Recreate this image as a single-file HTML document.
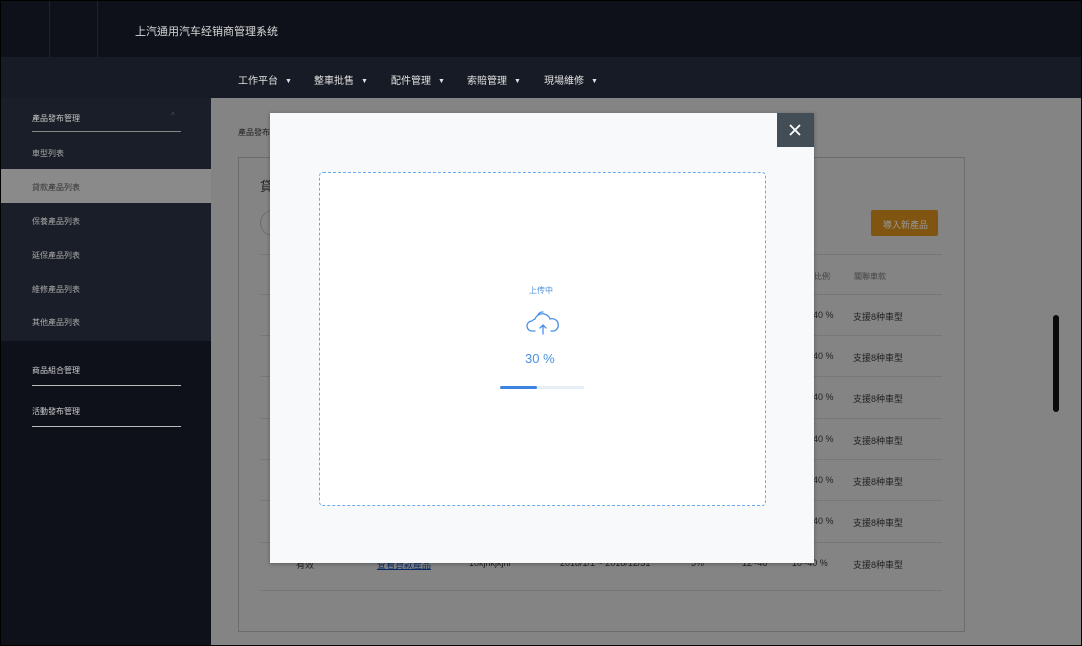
<!DOCTYPE html>
<html><head><meta charset="utf-8"><style>
*{margin:0;padding:0;box-sizing:border-box}
body{width:1082px;height:646px;overflow:hidden;position:relative;background:#000;font-family:"Liberation Sans","Noto Sans CJK TC",sans-serif}
.a{position:absolute}
.t{position:absolute;white-space:nowrap}
.ar{display:inline-block;margin-left:7px;font-size:7px;vertical-align:1px}
</style></head><body>
<div class="a" style="left:1px;top:1px;width:1080px;height:644px;background:#848484;overflow:hidden">
 <div class="a" style="left:0;top:0;width:1080px;height:56px;background:#0e111a"></div>
 <div class="a" style="left:48px;top:0;width:1px;height:56px;background:#1f232c"></div>
 <div class="a" style="left:96px;top:0;width:1px;height:56px;background:#1f232c"></div>
 <div class="t" style="left:134px;top:22px;font-size:11px;color:#d8d8d8">上汽通用汽车经销商管理系统</div>
 <div class="a" style="left:0;top:56px;width:1080px;height:41px;background:#171b25"></div>
 <div class="t" style="left:237px;top:71px;font-size:10px;color:#e0e0e0">工作平台<span class="ar">▼</span></div>
 <div class="t" style="left:313px;top:71px;font-size:10px;color:#e0e0e0">整車批售<span class="ar">▼</span></div>
 <div class="t" style="left:390px;top:71px;font-size:10px;color:#e0e0e0">配件管理<span class="ar">▼</span></div>
 <div class="t" style="left:466px;top:71px;font-size:10px;color:#e0e0e0">索賠管理<span class="ar">▼</span></div>
 <div class="t" style="left:543px;top:71px;font-size:10px;color:#e0e0e0">現場維修<span class="ar">▼</span></div>
 <div class="a" style="left:0;top:97px;width:210px;height:547px;background:#0e111a"></div>
 <div class="a" style="left:0;top:97px;width:210px;height:243px;background:#1a1e28"></div>
 <div class="a" style="left:0;top:168px;width:210px;height:34px;background:#8a8a8a"></div>
 <div class="t" style="left:31px;top:112px;font-size:8px;color:#c8c8c8">產品發布管理</div>
 <div class="t" style="left:170px;top:110px;font-size:8px;color:#555">^</div>
 <div class="a" style="left:31px;top:130px;width:149px;height:1px;background:#888"></div>
 <div class="t" style="left:31px;top:147px;font-size:8px;color:#aaa">車型列表</div>
 <div class="t" style="left:31px;top:181px;font-size:8px;color:#333">貸款產品列表</div>
 <div class="t" style="left:31px;top:215px;font-size:8px;color:#aaa">保養產品列表</div>
 <div class="t" style="left:31px;top:249px;font-size:8px;color:#aaa">延保產品列表</div>
 <div class="t" style="left:31px;top:283px;font-size:8px;color:#aaa">維修產品列表</div>
 <div class="t" style="left:31px;top:316px;font-size:8px;color:#aaa">其他產品列表</div>
 <div class="t" style="left:31px;top:364px;font-size:8px;color:#d0d0d0">商品組合管理</div>
 <div class="a" style="left:31px;top:384px;width:149px;height:1px;background:#bbb"></div>
 <div class="t" style="left:31px;top:405px;font-size:8px;color:#d0d0d0">活動發布管理</div>
 <div class="a" style="left:31px;top:425px;width:149px;height:1px;background:#bbb"></div>
 <div class="t" style="left:237px;top:126px;font-size:8px;color:#222">產品發布</div>
 <div class="a" style="left:237px;top:156px;width:727px;height:475px;border:1px solid #6c6c6c"></div>
 <div class="t" style="left:259px;top:175px;font-size:13px;color:#222">貸</div>
 <div class="a" style="left:259px;top:209px;width:30px;height:26px;border:1px solid #6e6e6e;border-radius:13px"></div>
 <div class="a" style="left:870px;top:209px;width:67px;height:26px;background:#805511;border-radius:2px"></div>
 <div class="t" style="left:882px;top:217px;font-size:9px;color:#999">導入新產品</div>
 <div class="a" style="left:260px;top:253px;width:681px;height:1px;background:#777"></div>
 <div class="t" style="left:813px;top:270px;font-size:8px;color:#444">比例</div>
 <div class="t" style="left:853px;top:270px;font-size:8px;color:#444">關聯車款</div>
 <div class="a" style="left:260px;top:293px;width:681px;height:1px;background:#777"></div>
 <div class="a" style="left:260px;top:334px;width:681px;height:1px;background:#777"></div>
 <div class="a" style="left:260px;top:375px;width:681px;height:1px;background:#777"></div>
 <div class="a" style="left:260px;top:417px;width:681px;height:1px;background:#777"></div>
 <div class="a" style="left:260px;top:458px;width:681px;height:1px;background:#777"></div>
 <div class="a" style="left:260px;top:499px;width:681px;height:1px;background:#777"></div>
 <div class="a" style="left:260px;top:541px;width:681px;height:1px;background:#777"></div>
 <div class="a" style="left:260px;top:589px;width:681px;height:1px;background:#777"></div>
 <div class="t" style="left:812px;top:309px;font-size:9px;color:#222">40 %</div>
 <div class="t" style="left:852px;top:309px;font-size:9px;color:#222">支援8种車型</div>
 <div class="t" style="left:812px;top:350px;font-size:9px;color:#222">40 %</div>
 <div class="t" style="left:852px;top:350px;font-size:9px;color:#222">支援8种車型</div>
 <div class="t" style="left:812px;top:391px;font-size:9px;color:#222">40 %</div>
 <div class="t" style="left:852px;top:391px;font-size:9px;color:#222">支援8种車型</div>
 <div class="t" style="left:812px;top:433px;font-size:9px;color:#222">40 %</div>
 <div class="t" style="left:852px;top:433px;font-size:9px;color:#222">支援8种車型</div>
 <div class="t" style="left:812px;top:474px;font-size:9px;color:#222">40 %</div>
 <div class="t" style="left:852px;top:474px;font-size:9px;color:#222">支援8种車型</div>
 <div class="t" style="left:812px;top:515px;font-size:9px;color:#222">40 %</div>
 <div class="t" style="left:852px;top:515px;font-size:9px;color:#222">支援8种車型</div>
 <div class="t" style="left:295px;top:557px;font-size:9px;color:#222">有效</div>
 <div class="t" style="left:376px;top:557px;font-size:9px;color:#0a2a66;text-decoration:underline">查看貸款產品</div>
 <div class="t" style="left:468px;top:557px;font-size:9px;color:#222">10kjhkjkjhl</div>
 <div class="t" style="left:559px;top:557px;font-size:9px;color:#222">2018/1/1 ~ 2018/12/31</div>
 <div class="t" style="left:690px;top:557px;font-size:9px;color:#222">5%</div>
 <div class="t" style="left:741px;top:557px;font-size:9px;color:#222">12~48</div>
 <div class="t" style="left:791px;top:557px;font-size:9px;color:#222">10~40 %</div>
 <div class="t" style="left:852px;top:557px;font-size:9px;color:#222">支援8种車型</div>
 <div class="a" style="left:1052px;top:314px;width:6px;height:97px;background:#0a0a0a;border-radius:3px"></div>
 <div class="a" style="left:269px;top:112px;width:544px;height:450px;background:#f8f9fb;box-shadow:0 1px 4px rgba(0,0,0,.3)"></div>
 <div class="a" style="left:776px;top:112px;width:37px;height:34px;background:#434d55"></div>
 <svg class="a" style="left:787px;top:122px" width="14" height="14" viewBox="0 0 14 14"><path d="M2 2L12 12M12 2L2 12" stroke="#fff" stroke-width="1.8"/></svg>
 <div class="a" style="left:318px;top:171px;width:447px;height:334px;background:#fff;border:1px dashed #6aaaf0;border-radius:4px"></div>
 <div class="t" style="left:528px;top:284px;font-size:8px;color:#4a90e2">上传中</div>
 <svg class="a" style="left:525px;top:308px" width="34" height="28" viewBox="0 0 34 28"><path d="M9 22H6a5 5 0 0 1 0-10a6 6 0 0 1 3-2a8 8 0 0 1 15 0a6 6 0 0 1 4 12h-3M17 25v-9M14 19l3-3l3 3M12 6a5 5 0 0 1 5-3" fill="none" stroke="#4a90e2" stroke-width="1.3" stroke-linecap="round" stroke-linejoin="round"/></svg>
 <div class="t" style="left:524px;top:350px;font-size:13px;color:#4a90e2">30 %</div>
 <div class="a" style="left:499px;top:385px;width:84px;height:3px;background:#e8eef5;border-radius:2px"></div>
 <div class="a" style="left:499px;top:385px;width:37px;height:3px;background:#3d84e0;border-radius:2px"></div>
</div>
</body></html>
